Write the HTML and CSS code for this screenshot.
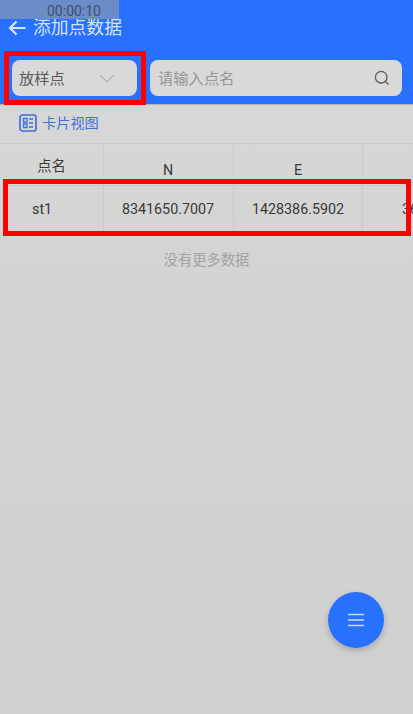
FILE: index.html
```html
<!DOCTYPE html>
<html>
<head>
  <title>添加点数据</title>
  <link rel="stylesheet" href="styles.css">
</head>
<body>
  <div class="phone">
    <div class="timer">00:00:10</div>

    <div class="header">
      <div class="title-row">
        <svg class="back" width="18" height="16" viewBox="0 0 18 16"><path d="M17.500 8H2M8.500 1.500L2 8l6.500 6.500" fill="none" stroke="#d9e2f0" stroke-width="2.200"/></svg>
        <h1>添加点数据</h1>
      </div>
      <div class="search-row">
        <div class="select">
          <span>放样点</span>
          <svg width="16" height="9" viewBox="0 0 16 9"><path d="M1 1l7 7 7-7" fill="none" stroke="#b4b4b4" stroke-width="1.200"/></svg>
        </div>
        <div class="search">
          <span>请输入点名</span>
          <svg width="16" height="16" viewBox="0 0 16 16"><circle cx="7.200" cy="7.200" r="5.800" fill="none" stroke="#5c5c5c" stroke-width="1.300"/><path d="M11.500 11.500l3 3" stroke="#5c5c5c" stroke-width="1.300"/></svg>
        </div>
      </div>
    </div>

    <div class="view-link">
      <svg width="18" height="18" viewBox="0 0 18 18"><rect x="1" y="1" width="16" height="16" rx="2.500" fill="none" stroke="#3f72d8" stroke-width="1.700"/><path d="M4.500 4.500h3.500v3.500H4.500zM4.500 10h3.500v3.500H4.500z" fill="none" stroke="#3f72d8" stroke-width="1.300"/><path d="M10 5h4M10 9h4M10 13h4" fill="none" stroke="#3f72d8" stroke-width="1.500"/></svg>
      <span>卡片视图</span>
    </div>

    <div class="table">
      <div class="row head">
        <div class="cell name"><span class="up">点名</span></div>
        <div class="cell n">N</div>
        <div class="cell e">E</div>
        <div class="cell z"></div>
      </div>
      <div class="row body-row">
        <div class="cell name">st1</div>
        <div class="cell n">8341650.7007</div>
        <div class="cell e">1428386.5902</div>
        <div class="cell z">36.2175</div>
      </div>
    </div>

    <div class="no-more">没有更多数据</div>

    <div class="fab">
      <svg width="18" height="14" viewBox="0 0 18 14"><path d="M1 1.500h16M1 7h16M1 12.500h16" stroke="#c9d8f5" stroke-width="1.400"/></svg>
    </div>

    <div class="mark mark-select"></div>
    <div class="mark mark-row"></div>
  </div>
</body>
</html>
```

FILE: styles.css
```css
:root {
  --blue: #2870ff;
  --text: #3a3a3a;
  --line: #cbcbcb;
}

* {
  margin: 0;
  padding: 0;
  box-sizing: border-box;
}

body {
  font-family: Roboto, "Noto Sans CJK SC", sans-serif;
  background: #d2d2d2;
  color: var(--text);
}

.phone {
  position: relative;
  width: 413px;
  height: 714px;
  overflow: hidden;
  background: linear-gradient(#d9d9d9, #d4d4d4 35%, #d0d0d0);
}

.timer {
  position: absolute;
  top: 0;
  left: 0;
  width: 119px;
  height: 19px;
  background: #6c8cc8;
  color: #3f4f70;
  font-size: 14px;
  line-height: 22px;
  text-align: center;
  padding-left: 29px;
}

.header {
  height: 104px;
  background: var(--blue);
  padding: 16px 11px 0 12px;
  box-shadow: 0 1px 1px #b5b5b5;
}

.title-row {
  display: flex;
  align-items: center;
  gap: 8px;
  height: 24px;
  margin-left: -4px;
}

.title-row h1 {
  font-size: 17.800px;
  font-weight: 400;
  color: #d9e2f0;
  margin-left: -1px;
  padding-bottom: 4px;
}

.search-row {
  display: flex;
  gap: 13px;
  margin-top: 20px;
}

.select,
.search {
  height: 36px;
  background: #d9d9d9;
  border-radius: 8px;
  display: flex;
  align-items: center;
  justify-content: space-between;
  font-size: 15.300px;
}

.select span,
.search span {
  padding-bottom: 3px;
}

.select {
  width: 125px;
  padding: 0 22px 0 7px;
  color: #5a5a5a;
}

.search {
  flex: 1;
  padding: 0 12px 0 8px;
  color: #969696;
}

.view-link {
  display: flex;
  align-items: center;
  gap: 5px;
  height: 39px;
  padding-left: 19px;
  padding-bottom: 1px;
  color: #3f72d8;
  font-size: 14.200px;
}

.view-link span {
  padding-bottom: 3px;
}

.table {
  border-top: 1px solid var(--line);
}

.row {
  display: flex;
}

.head {
  height: 41px;
}

.body-row {
  height: 49px;
  border-bottom: 1px solid var(--line);
  border-top: 1px solid var(--line);
}

.body-row .cell {
  padding-bottom: 2px;
}

.cell {
  flex: none;
  display: flex;
  align-items: center;
  justify-content: center;
  font-size: 14.300px;
  border-right: 1px solid var(--line);
  white-space: nowrap;
}

.head .cell {
  padding-top: 10px;
}

.head .up {
  margin-top: -11px;
}

.name {
  width: 104px;
}

.body-row .name {
  justify-content: flex-start;
  padding-left: 32px;
}

.n {
  width: 130px;
  padding-right: 1px;
}

.e {
  width: 129px;
}

.z {
  width: 130px;
  border-right: none;
}

.no-more {
  margin-top: 14px;
  text-align: center;
  font-size: 14.300px;
  color: #a3a3a3;
}

.fab {
  position: absolute;
  left: 328px;
  top: 592px;
  width: 56px;
  height: 56px;
  border-radius: 50%;
  background: var(--blue);
  box-shadow: 0 3px 6px rgba(0, 0, 0, 0.2);
  display: flex;
  align-items: center;
  justify-content: center;
}

.mark {
  position: absolute;
  border: 5px solid #ff0000;
}

.mark-select {
  left: 4px;
  top: 51px;
  width: 142px;
  height: 54px;
}

.mark-row {
  left: 3px;
  top: 179px;
  width: 408px;
  height: 57px;
}
```
